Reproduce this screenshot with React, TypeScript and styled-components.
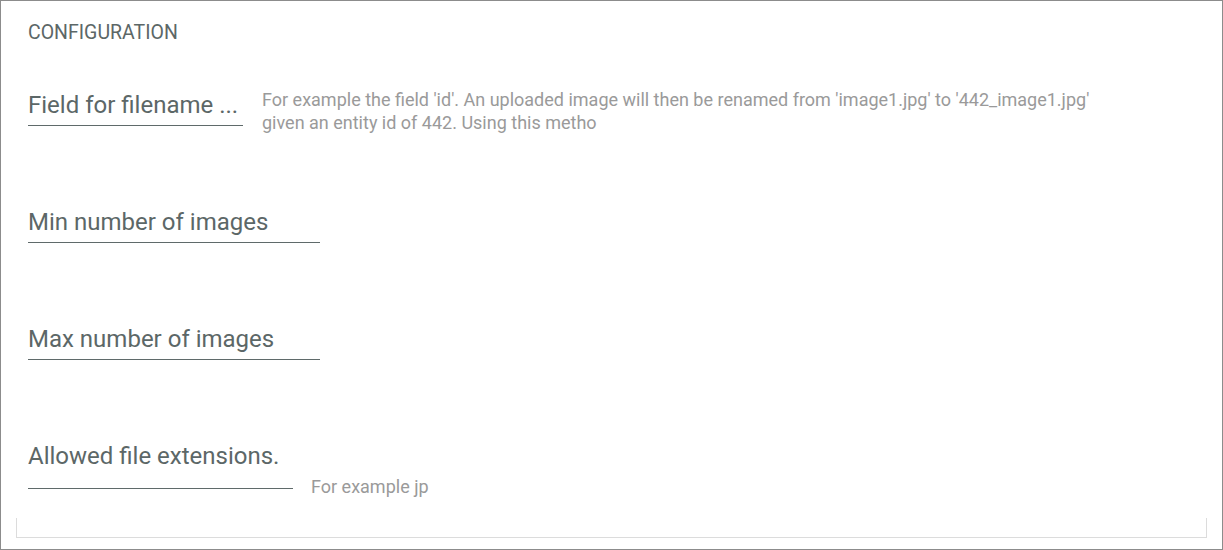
import React from "react";
import styled, { createGlobalStyle } from "styled-components";

const Global = createGlobalStyle`
  html, body { margin: 0; padding: 0; background: #ffffff; }
  body { font-family: Roboto, "Noto Sans", Arial, sans-serif; }
  * { box-sizing: border-box; }
`;

const Frame = styled.div`
  width: 1223px;
  height: 550px;
  border: 1px solid #8c8c8c;
  padding: 21px 15px 0 15px;
  display: flex;
  flex-direction: column;
  background: #fff;
`;

const Title = styled.div`
  padding-left: 12px;
  font-size: 19.5px;
  line-height: 22px;
  color: #5c6767;
  text-transform: uppercase;
`;

const Form = styled.div`
  padding-left: 12px;
  margin-top: 47px;
  display: flex;
  flex-direction: column;
`;

const Row = styled.div<{ $h: number }>`
  display: flex;
  align-items: flex-start;
  height: ${(p) => p.$h}px;
`;

const Field = styled.div<{ $w: number; $pb: number }>`
  width: ${(p) => p.$w}px;
  flex: none;
  font-size: 24px;
  line-height: 28px;
  color: #5c6767;
  padding-bottom: ${(p) => p.$pb}px;
  border-bottom: 1px solid #5f6a6a;
  white-space: nowrap;
  overflow: hidden;
`;

const Helper = styled.div<{ $top: number; $gap: number }>`
  margin-top: ${(p) => p.$top}px;
  margin-left: ${(p) => p.$gap}px;
  font-size: 18px;
  line-height: 23px;
  color: #9a9a9a;
`;

const Line = styled.span`
  display: block;
  white-space: nowrap;
`;

const Footer = styled.div`
  margin-top: 29px;
  height: 20px;
  border: 1px solid #dcdcdc;
  border-top: none;
`;

export default function App() {
  return (
    <>
      <Global />
      <Frame>
        <Title>Configuration</Title>
        <Form>
          <Row $h={117}>
            <Field $w={215} $pb={6}>Field for filename ...</Field>
            <Helper $top={-3} $gap={19}>
              <Line>
                For example the field 'id'. An uploaded image will then be renamed from 'image1.jpg' to '442_image1.jpg'
              </Line>
              <Line>given an entity id of 442. Using this metho</Line>
            </Helper>
          </Row>
          <Row $h={117}>
            <Field $w={292} $pb={6}>Min number of images</Field>
          </Row>
          <Row $h={117}>
            <Field $w={292} $pb={6}>Max number of images</Field>
          </Row>
          <Row $h={47}>
            <Field $w={265} $pb={18}>Allowed file extensions.</Field>
            <Helper $top={33} $gap={18}>For example jp</Helper>
          </Row>
        </Form>
        <Footer />
      </Frame>
    </>
  );
}
